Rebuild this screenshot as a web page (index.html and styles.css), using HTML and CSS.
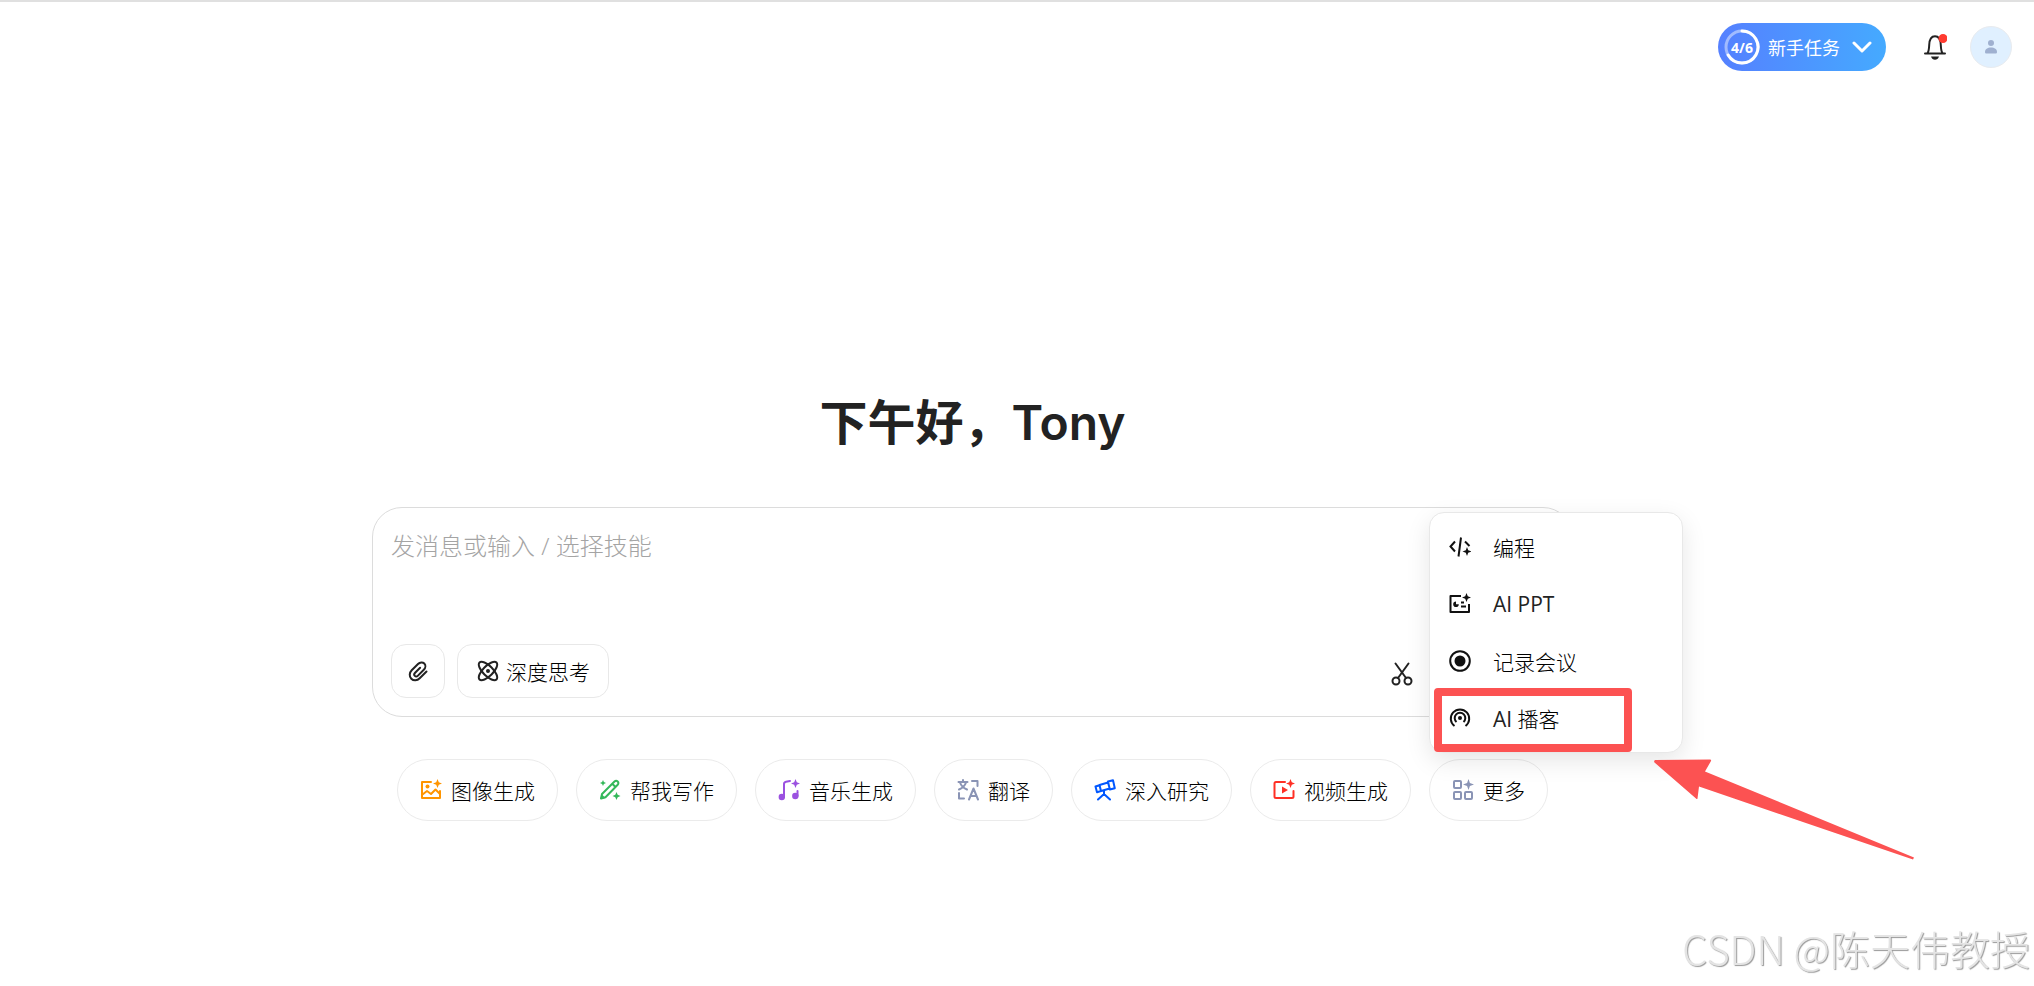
FILE: index.html
```html
<!DOCTYPE html>
<html lang="zh-CN">
<head>
  <meta charset="UTF-8">
  <title>下午好，Tony</title>
  <meta name="viewport" content="width=device-width, initial-scale=1.0">
  <link rel="stylesheet" href="styles.css">
</head>
<body>

  <header class="topbar">
    <button type="button" class="task-pill">
      <span class="task-ring">
        <svg viewBox="0 0 36 36" width="36" height="36" fill="none" stroke="#fff" stroke-width="3">
          <circle cx="18" cy="18" r="16" stroke-opacity=".45"/>
          <path d="M18 2a16 16 0 1 1-13.860 24" stroke-linecap="round"/>
        </svg>
        <b>4/6</b>
      </span>
      新手任务
      <svg class="chevron" viewBox="0 0 20 20" width="20" height="20" fill="none" stroke="#fff" stroke-width="3" stroke-linecap="round" stroke-linejoin="round">
        <path d="M2 6l8 8 8-8"/>
      </svg>
    </button>
    <button type="button" class="bell" aria-label="通知">
      <svg viewBox="0 0 24 28" width="24" height="28">
        <path d="M2 20.500h20M4.500 20c1.500-2 1.500-4 1.700-8C6.400 6.500 8 3.200 12 3.200s5.600 3.300 5.800 8.800c.2 4 .2 6 1.700 8" fill="none" stroke="#222" stroke-width="2" stroke-linecap="round"/>
        <path d="M8 23.500h8c-.8 2.300-2.200 3.200-4 3.200s-3.200-.9-4-3.200z" fill="#222"/>
        <circle cx="20" cy="5.500" r="4.500" fill="#ff3b30"/>
      </svg>
    </button>
    <a href="#" class="avatar" aria-label="账号">
      <svg viewBox="0 0 14 16" width="14" height="16" fill="#9fb0d0">
        <circle cx="7" cy="4" r="3"/>
        <path d="M1 13c0-3 2.500-4.600 6-4.600s6 1.600 6 4.600c0 1-.6 1.500-1.500 1.500h-9C1.600 14.500 1 14 1 13z"/>
      </svg>
    </a>
  </header>

  <main>
    <h1>下午好，Tony</h1>

    <form class="composer">
      <textarea aria-label="消息" placeholder="发消息或输入 / 选择技能"></textarea>
      <div class="tools">
        <button type="button" class="tool" aria-label="附件">
          <svg viewBox="0 0 22 22" width="22" height="22" fill="none" stroke="#222" stroke-width="2" stroke-linecap="round" stroke-linejoin="round">
            <path d="M19.500 11.500l-6.800 6.800c-2.500 2.500-6.200 2.600-8.400.4s-2.100-5.900.4-8.400l6.300-6.300c1.900-1.900 4.700-2.100 6.300-.5s1.400 4.400-.5 6.300L11 15.600c-1 1-2.400 1.100-3.200.3s-.7-2.200.3-3.200l5-5"/>
          </svg>
        </button>
        <button type="button" class="tool tool-text">
          <svg viewBox="0 0 22 22" width="22" height="22" fill="none" stroke="#222" stroke-width="2">
            <ellipse cx="11" cy="11" rx="12" ry="5" transform="rotate(45 11 11)"/>
            <ellipse cx="11" cy="11" rx="12" ry="5" transform="rotate(-45 11 11)"/>
            <circle cx="11" cy="11" r="2" fill="#222" stroke="none"/>
          </svg>
          深度思考
        </button>
        <button type="button" class="scissors" aria-label="截图">
          <svg viewBox="0 0 22 24" width="22" height="24" fill="none" stroke="#222" stroke-width="2" stroke-linecap="round">
            <circle cx="5" cy="19" r="3.500"/>
            <circle cx="17" cy="19" r="3.500"/>
            <path d="M4.500 1.500L15 16M17.500 1.500L7 16"/>
          </svg>
        </button>
      </div>
    </form>

    <nav class="skills">
      <button type="button" class="skill">
        <svg viewBox="0 0 22 22" width="22" height="22" fill="none" stroke="#ff9500" stroke-width="2" stroke-linecap="round" stroke-linejoin="round">
          <path d="M11 3H2v16h18v-7M2.500 15.500L7 12l4 3 4.500-4.500 4 4"/>
          <circle cx="7.500" cy="7.500" r="2" fill="#ff9500" stroke="none"/>
          <path d="M17.500 0l1.300 3.200L22 4.500l-3.200 1.300L17.500 9l-1.300-3.200L13 4.500l3.200-1.300z" fill="#ff9500" stroke="none"/>
        </svg>
        图像生成
      </button>
      <button type="button" class="skill">
        <svg viewBox="0 0 22 22" width="22" height="22" fill="none" stroke="#34b85a" stroke-width="2" stroke-linejoin="round">
          <path d="M2 19.500l1-4.500L15.500 2.500c1-1 2.300-.9 3.200 0s1 2.200 0 3.200L6.500 18.200zM13.500 5l3 3"/>
          <path d="M1.500 20l1-5 4 4z" fill="#34b85a" stroke="none"/>
          <path d="M4 1l.9 2.100L7 4l-2.100.9L4 7l-.9-2.100L1 4l2.100-.9zM17.500 13l1.200 2.800 2.800 1.200-2.800 1.200-1.200 2.800-1.200-2.800-2.800-1.200 2.800-1.200z" fill="#34b85a" stroke="none"/>
        </svg>
        帮我写作
      </button>
      <button type="button" class="skill">
        <svg viewBox="0 0 22 22" width="22" height="22" fill="none" stroke="#9b51e0" stroke-width="2" stroke-linecap="round">
          <path d="M6 18V5c0-1.300.7-2 2-2.300l4-.7M19.500 17v-5"/>
          <circle cx="3.800" cy="18" r="3.200" fill="#9b51e0" stroke="none"/>
          <circle cx="17.300" cy="17" r="3.200" fill="#9b51e0" stroke="none"/>
          <path d="M17.500 0l1.300 3.200L22 4.500l-3.200 1.300L17.500 9l-1.300-3.200L13 4.500l3.200-1.300z" fill="#9b51e0" stroke="none"/>
        </svg>
        音乐生成
      </button>
      <button type="button" class="skill">
        <svg viewBox="0 0 22 22" width="22" height="22" fill="none" stroke="#8a94b5" stroke-width="2" stroke-linecap="round" stroke-linejoin="round">
          <path d="M1.500 3h9M6 1v2M3 3.500c1 3 3.500 5.500 7 7M9 3.500c-1 3-3.500 5.500-7 7"/>
          <path d="M15 2h5.500v5M2 14v5.500h5M12 20.500l4.500-11 4.500 11M13.500 17h6"/>
        </svg>
        翻译
      </button>
      <button type="button" class="skill">
        <svg viewBox="0 0 22 22" width="22" height="22" fill="none" stroke="#0057ff" stroke-width="2" stroke-linecap="round" stroke-linejoin="round">
          <path d="M14 2.500l5-1.300 1.800 8-5 1.300zM5.500 6L14 3.500l1.700 6L7 12zM1.500 7.500l4-1.300L7 12l-4 1.200zM10 11.500V15M10 15l-6 5.500M10 15l6 5.500"/>
        </svg>
        深入研究
      </button>
      <button type="button" class="skill">
        <svg viewBox="0 0 22 22" width="22" height="22" fill="none" stroke="#ff3025" stroke-width="2" stroke-linecap="round" stroke-linejoin="round">
          <path d="M12 3H3Q1.500 3 1.500 4.500v13Q1.500 19 3 19h16q1.500 0 1.500-1.500V12"/>
          <path d="M9 7.500v7l6-3.500z" fill="#ff3025" stroke="none"/>
          <path d="M17.500 0l1.300 3.200L22 4.500l-3.200 1.300L17.500 9l-1.300-3.200L13 4.500l3.200-1.300z" fill="#ff3025" stroke="none"/>
        </svg>
        视频生成
      </button>

      <div class="more">
        <button type="button" class="skill">
          <svg viewBox="0 0 22 22" width="22" height="22" fill="none" stroke="#8a94b5" stroke-width="2">
            <rect x="2" y="2" width="7" height="7" rx="1"/>
            <rect x="2" y="13" width="7" height="7" rx="1"/>
            <rect x="13" y="13" width="7" height="7" rx="1"/>
            <path d="M16.500 0l1.400 4.100L22 5.500l-4.100 1.400L16.500 11l-1.400-4.100L11 5.500l4.100-1.400z" fill="#8a94b5" stroke="none"/>
          </svg>
          更多
        </button>

        <div class="menu">
          <button type="button" class="menu-item">
            <svg viewBox="0 0 22 22" width="22" height="22" fill="none" stroke="#111" stroke-width="2">
              <path d="M6 5.500L1.500 10.500 6 15.500M12 1.500L9.500 20.500M16 5.500l4.500 4.500"/>
              <path d="M18 11l1.200 3.300L22.500 15.500l-3.300 1.200L18 20l-1.200-3.300L13.500 15.500l3.300-1.200z" fill="#111" stroke="none"/>
            </svg>
            编程
          </button>
          <button type="button" class="menu-item">
            <svg viewBox="0 0 22 22" width="22" height="22" fill="none" stroke="#111" stroke-width="2" stroke-linejoin="round">
              <path d="M12 3H1.500v16H20v-8M12 9.500h3M12 13.500h5"/>
              <path d="M7 8.500a2.800 2.800 0 1 0 2.800 2.800H7z" fill="#111" stroke="none"/>
              <path d="M17.500 0l1.300 3.200L22 4.500l-3.200 1.300L17.500 9l-1.300-3.200L13 4.500l3.200-1.300z" fill="#111" stroke="none"/>
            </svg>
            <span class="latin">AI PPT</span>
          </button>
          <button type="button" class="menu-item">
            <svg viewBox="0 0 22 22" width="22" height="22" fill="none" stroke="#111" stroke-width="2">
              <circle cx="11" cy="11" r="9.800"/>
              <circle cx="11" cy="11" r="5.500" fill="#111" stroke="none"/>
            </svg>
            记录会议
          </button>
          <button type="button" class="menu-item marked">
            <svg viewBox="0 0 22 22" width="22" height="22" fill="none" stroke="#111" stroke-width="2">
              <path d="M5.500 19a9.200 9.200 0 1 1 11 0M7.500 15a5.300 5.300 0 1 1 7 0"/>
              <circle cx="11" cy="11" r="2" fill="#111" stroke="none"/>
            </svg>
            <span><span class="latin">AI</span> 播客</span>
          </button>
        </div>

        <svg class="arrow" viewBox="0 0 262 104" width="262" height="104" fill="#fc5252">
          <path d="M2 1L57 .5q1.500 0 1 1.500L52 12.500l209 86-1 2L46 27.500l-1.500 12q-.5 1-1.500 0L1.500 3.500q-1-1.500.5-2.500z"/>
        </svg>
      </div>
    </nav>
  </main>

  <div class="watermark">CSDN @陈天伟教授</div>

</body>
</html>
```
FILE: styles.css
```css
* {
  box-sizing: border-box;
}

body {
  margin: 0;
  min-height: 100vh;
  border-top: 2px solid #e0e0e0;
  background: #fff;
  color: #222;
  font-family: "Open Sans", "Noto Sans CJK SC", sans-serif;
  font-size: 21px;
}

button,
textarea {
  margin: 0;
  padding: 0;
  border: none;
  background: none;
  color: inherit;
  font: inherit;
}

button {
  cursor: pointer;
}

svg {
  display: block;
  flex: none;
}

/* top bar */
.topbar {
  display: flex;
  align-items: center;
  justify-content: flex-end;
  padding: 21px 22px;
}

.task-pill {
  display: flex;
  align-items: center;
  height: 48px;
  padding: 0 14px 0 6px;
  border-radius: 24px;
  background: linear-gradient(90deg, #5580ff, #45aaff);
  color: #fff;
  font-size: 18px;
}

.task-ring {
  display: grid;
  place-items: center;
  margin-right: 8px;
}

.task-ring > * {
  grid-area: 1 / 1;
}

.task-ring b {
  font-size: 14px;
  font-weight: 700;
}

.chevron {
  margin-left: 12px;
}

.bell {
  margin: 0 23px 0 37px;
}

.avatar {
  display: flex;
  align-items: center;
  justify-content: center;
  width: 42px;
  height: 42px;
  border: 1px solid #e8ebef;
  border-radius: 50%;
  background: #e0f0ff;
}

/* centre column */
main {
  display: flex;
  flex-direction: column;
  align-items: center;
  padding: 299px 89px 0 0;
}

h1 {
  margin: 0 0 52px;
  font-family: Inter, "Noto Sans CJK SC", sans-serif;
  font-size: 48px;
  font-weight: 600;
  line-height: 64px;
}

.composer {
  width: 100%;
  max-width: 1201px;
  padding: 18px;
  border: 1px solid #dcdcdc;
  border-radius: 30px;
}

.composer textarea {
  display: block;
  width: 100%;
  height: 118px;
  font-size: 24px;
  font-weight: 300;
  line-height: 40px;
  resize: none;
  outline: none;
}

.composer textarea::placeholder {
  color: #a4a4a4;
}

.tools {
  display: flex;
  align-items: center;
  gap: 12px;
}

.tool {
  display: flex;
  align-items: center;
  justify-content: center;
  gap: 7px;
  width: 54px;
  height: 54px;
  border: 1px solid #e8e8e8;
  border-radius: 15px;
}

.tool-text {
  width: auto;
  padding: 0 18px 0 19px;
}

.scissors {
  margin: 6px 141px 0 auto;
}

.skills {
  display: flex;
  gap: 18px;
  margin-top: 42px;
}

.skill {
  display: flex;
  align-items: center;
  gap: 9px;
  height: 62px;
  padding: 0 22px;
  border: 1px solid #ebebeb;
  border-radius: 31px;
  white-space: nowrap;
}

.skill,
.tool-text,
.menu-item {
  color: #000;
  font-weight: 300;
}

/* "more" menu */
.more {
  position: relative;
}

.menu {
  position: absolute;
  left: 0;
  bottom: calc(100% + 6px);
  width: 254px;
  padding: 5px 4px 6px;
  border: 1px solid #e8e8e8;
  border-radius: 15px;
  background: #fff;
  box-shadow: 0 8px 24px rgba(0, 0, 0, 0.1);
}

.menu-item {
  position: relative;
  display: flex;
  align-items: center;
  gap: 22px;
  width: 100%;
  height: 57px;
  padding: 0 15px;
}

.latin {
  color: #222;
  font-weight: 500;
}

.marked::after {
  content: "";
  position: absolute;
  inset: -1px 46px -6px 0;
  border: 8px solid #fc5252;
  border-radius: 4px;
}

.arrow {
  position: absolute;
  left: 224px;
  top: 0;
}

.watermark {
  position: fixed;
  right: 4px;
  bottom: 10px;
  color: #e4e4e4;
  font-family: "Noto Sans CJK SC", sans-serif;
  font-size: 40px;
  font-weight: 300;
  line-height: 56px;
  text-shadow: 1px 1px 1px #999;
}
```
